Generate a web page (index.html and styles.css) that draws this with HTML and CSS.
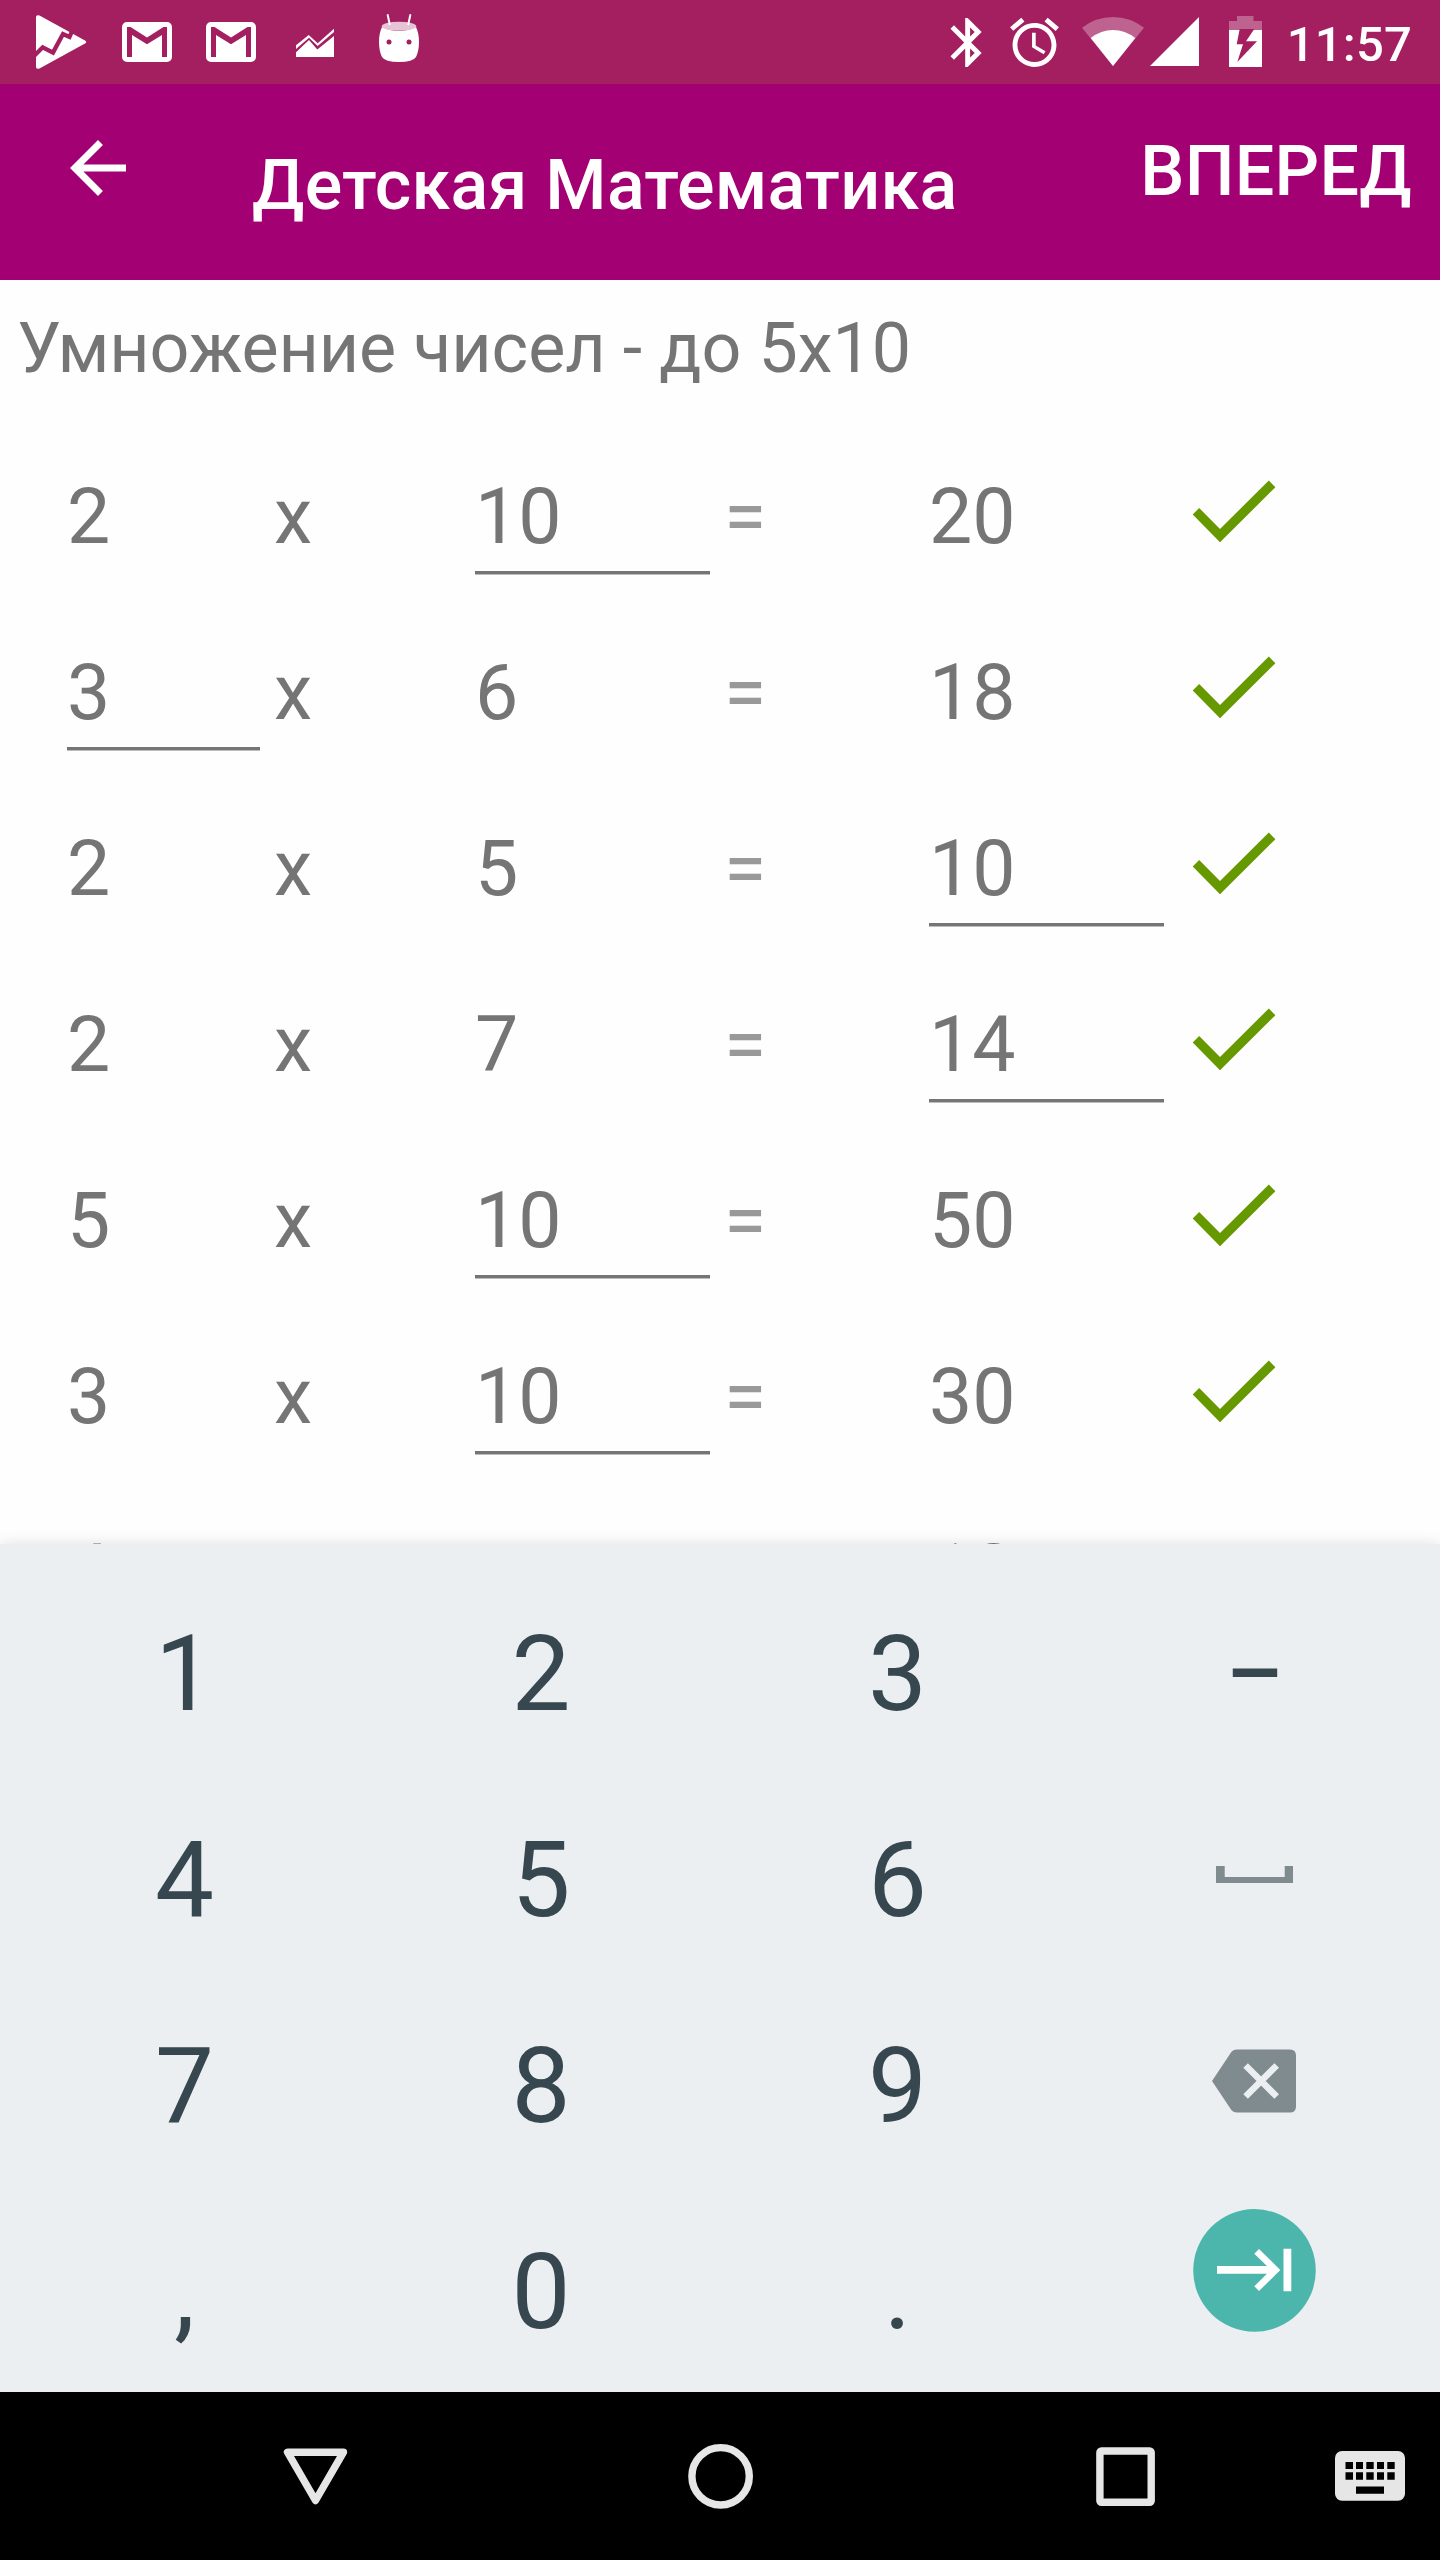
FILE: index.html
```html
<!DOCTYPE html>
<html lang="ru">
<head>
<meta charset="utf-8">
<title>Детская Математика</title>
<link rel="stylesheet" href="styles.css">
</head>
<body>
<svg class="defs" width="0" height="0" aria-hidden="true">
  <symbol id="check" viewBox="1190 429 90 176"><path d="M1192.7 514.5L1199.2 508L1220 529L1268.8 480.5L1275.4 487.2L1220 542.3Z"/></symbol>
</svg>
<div class="screen">
  <div class="status">
    <div class="notes">
      <svg viewBox="21 0 84 84"><path d="M36 17Q36 14.5 39.500 15.500L85 40.500Q87.500 42 85 43.500L39.500 68.500Q36 69.500 36 67Z"/><path class="crack" d="M33 57L42.700 47.300L53 52.600L63 34L69.500 37L73 29"/></svg>
      <svg viewBox="105 0 84 84"><path fill-rule="evenodd" d="M127 22H167A5 5 0 0 1 172 27V57A5 5 0 0 1 167 62H127A5 5 0 0 1 122 57V27A5 5 0 0 1 127 22ZM127 27V57H132V35L147 44.300L162 35V57H167V27H163.500L147 37.500L130.500 27Z"/></svg>
      <svg viewBox="105 0 84 84"><path fill-rule="evenodd" d="M127 22H167A5 5 0 0 1 172 27V57A5 5 0 0 1 167 62H127A5 5 0 0 1 122 57V27A5 5 0 0 1 127 22ZM127 27V57H132V35L147 44.300L162 35V57H167V27H163.500L147 37.500L130.500 27Z"/></svg>
      <svg viewBox="273 0 84 84"><path d="M296 45.300L308.700 35L317.700 43.300L334 28.700V32L317.700 46L309 37.700L296 49ZM296 52.300L309 40L317.300 49.600L334 36V57H296Z"/></svg>
      <svg viewBox="357 0 84 84"><path d="M382 27Q399 35 416 27Q419 33 419 42Q419 51 416 57Q413 62 399 62Q385 62 382 57Q379 51 379 42Q379 33 382 27Z"/><ellipse class="brain" cx="399" cy="26.300" rx="17.200" ry="4.500"/><path class="ears" d="M387.700 15L389.700 24.300M410.300 15L408.300 24.300"/><circle class="eye" cx="389" cy="42" r="2.500"/><circle class="eye" cx="409" cy="42" r="2.500"/></svg>
    </div>
    <svg class="system" viewBox="940 0 340 84">
      <path transform="translate(938.250 13.100) scale(2.450)" d="M17.710 7.710L12 2h-1v7.590L6.410 5 5 6.410 10.590 12 5 17.590 6.410 19 11 14.410V22h1l5.710-5.710-4.300-4.290 4.300-4.290zM13 5.830l1.880 1.880L13 9.590V5.830zm1.880 10.460L13 18.170v-3.760l1.880 1.880z"/>
      <path transform="translate(1005.200 13.200) scale(2.440)" d="M22 5.720l-4.600-3.860-1.290 1.530 4.600 3.860L22 5.720zM7.880 3.390L6.600 1.860 2 5.710l1.290 1.530 4.590-3.850zM12.500 8H11v6l4.750 2.850.75-1.230-4-2.370V8zM12 4c-4.970 0-9 4.030-9 9s4.020 9 9 9c4.970 0 9-4.030 9-9s-4.030-9-9-9zm0 16c-3.870 0-7-3.130-7-7s3.130-7 7-7 7 3.130 7 7-3.130 7-7 7z"/>
      <path opacity=".3" d="M1082 27.700Q1096 17 1113 17Q1130 17 1144 27.700L1113 66Z"/>
      <path d="M1090.700 38Q1101 30 1113 30Q1125 30 1135.300 38L1113 66Z"/>
      <path d="M1150 66H1199V17Z"/>
      <path opacity=".3" d="M1237 16H1253.500V21H1262V30H1229V21H1237Z"/>
      <path d="M1229 30H1262V67H1229Z"/>
      <path class="bolt" d="M1239.700 29H1254.300L1246 41.300H1257L1237.300 62L1243 44.300H1236.700Z"/>
    </svg>
    <span class="clock">11:57</span>
  </div>

  <header class="bar">
    <svg class="back" viewBox="0 0 24 24"><path d="M20 11H7.830l5.590-5.590L12 4l-8 8 8 8 1.410-1.410L7.830 13H20v-2z"/></svg>
    <h1 class="title">Детская Математика</h1>
    <span class="forward">ВПЕРЕД</span>
  </header>

  <main class="content">
    <h2 class="topic">Умножение чисел - до 5x10</h2>
    <div class="task"><span>2</span><span>x</span><span class="answer">10</span><span class="eq">=</span><span>20</span><svg class="check"><use href="#check"/></svg></div>
    <div class="task"><span class="answer first">3</span><span>x</span><span>6</span><span class="eq">=</span><span>18</span><svg class="check"><use href="#check"/></svg></div>
    <div class="task"><span>2</span><span>x</span><span>5</span><span class="eq">=</span><span class="answer">10</span><svg class="check"><use href="#check"/></svg></div>
    <div class="task"><span>2</span><span>x</span><span>7</span><span class="eq">=</span><span class="answer">14</span><svg class="check"><use href="#check"/></svg></div>
    <div class="task"><span>5</span><span>x</span><span class="answer">10</span><span class="eq">=</span><span>50</span><svg class="check"><use href="#check"/></svg></div>
    <div class="task"><span>3</span><span>x</span><span class="answer">10</span><span class="eq">=</span><span>30</span><svg class="check"><use href="#check"/></svg></div>
    <div class="task"><span>4</span><span>x</span><span class="answer"></span><span class="eq">=</span><span>12</span></div>
  </main>

  <div class="keypad">
    <span>1</span><span>2</span><span>3</span><span class="dash">–</span>
    <span>4</span><span>5</span><span>6</span>
    <svg viewBox="1077 1778 357 206"><path class="muted" d="M1216 1866H1224.700V1877H1284.700V1866H1293V1883H1216Z"/></svg>
    <span>7</span><span>8</span><span>9</span>
    <svg viewBox="1077 1984 357 206"><path class="muted" d="M1212 2081L1231 2052.500Q1233 2049.500 1237 2049.500H1290Q1296 2049.500 1296 2055.500V2106.500Q1296 2112.500 1290 2112.500H1237Q1233 2112.500 1231 2109.500Z"/><path class="cross" d="M1245.600 2065.500L1276.700 2096.500M1276.700 2065.500L1245.600 2096.500"/></svg>
    <span>,</span><span>0</span><span>.</span>
    <svg viewBox="1077 2190 357 206"><circle class="next" cx="1254.500" cy="2270.400" r="61.300"/><path fill="#fff" d="M1217 2266H1267L1254.300 2253.700L1259 2249L1280.300 2270L1259 2291L1254.300 2286.300L1267 2273.700H1217ZM1283.500 2248.700H1291.300V2291.300H1283.500Z"/></svg>
  </div>

  <nav class="nav">
    <svg viewBox="0 2392 1440 168">
      <path class="line" d="M287.500 2452.200H343.500L315.500 2500.500Z"/>
      <circle class="line" cx="720.600" cy="2476.300" r="28.700"/>
      <rect class="line" x="1099.900" y="2451" width="51.300" height="51.300" rx="1.500"/>
      <path class="fill" fill-rule="evenodd" d="M1342 2451H1398A7 7 0 0 1 1405 2458V2493.700A7 7 0 0 1 1398 2500.700H1342A7 7 0 0 1 1335 2493.700V2458A7 7 0 0 1 1342 2451ZM1345.500 2462V2469H1353V2462ZM1356 2462V2469H1363V2462ZM1366.300 2462V2469H1373.700V2462ZM1377 2462V2469H1384V2462ZM1387.300 2462V2469H1394.700V2462ZM1345.500 2472.300V2479.700H1353V2472.300ZM1356 2472.300V2479.700H1363V2472.300ZM1366.300 2472.300V2479.700H1373.700V2472.300ZM1377 2472.300V2479.700H1384V2472.300ZM1387.300 2472.300V2479.700H1394.700V2472.300ZM1356 2486.500V2493.700H1384V2486.500Z"/>
    </svg>
  </nav>
</div>
</body>
</html>
```
FILE: styles.css
```css
* { box-sizing: border-box; }
body { margin: 0; background: #fefefe; font-family: Roboto, "Noto Sans", sans-serif; }
svg { display: block; flex: none; }
.defs { position: absolute; }
.screen { width: 1440px; height: 2560px; display: flex; flex-direction: column; overflow: hidden; }

.status { height: 84px; flex: none; display: flex; padding: 0 28px 0 21px; background: #a31f5f; color: #fff; fill: #fff; }
.notes { display: flex; flex: 1; }
.notes svg { width: 84px; height: 84px; }
.crack { fill: none; stroke: #a31f5f; stroke-width: 4.3; }
.brain { fill: #e6c3d5; }
.ears { fill: none; stroke: #fff; stroke-width: 2; stroke-linecap: round; }
.eye, .bolt { fill: #a31f5f; }
.system { width: 340px; height: 84px; }
.clock { width: 132px; padding-top: 5px; line-height: 80px; text-align: right; font-size: 49px; font-weight: 500; letter-spacing: .2px; }

.bar { height: 196px; flex: none; display: flex; align-items: flex-start; padding: 0 28px 0 56px; background: #a30074; color: #fff; }
.back { width: 84px; height: 84px; margin: 42px 112px 0 0; fill: #fff; }
.title { flex: 1; margin: 0; padding-top: 6px; font-size: 70px; font-weight: 500; line-height: 190px; letter-spacing: .3px; white-space: nowrap; }
.forward { font-size: 70px; font-weight: 500; line-height: 174px; letter-spacing: .3px; }

.content { height: 1264px; flex: none; overflow: hidden; color: #757575; }
.topic { height: 149px; margin: 0; padding-left: 17px; font-size: 70px; font-weight: 400; line-height: 136px; letter-spacing: -.1px; }
.task { display: grid; grid-template-columns: 207px 201px 249px 205px 261px 90px; height: 176px; padding-left: 67px; font-size: 77px; line-height: 176px; }
.answer { width: 235px; height: 145px; border-bottom: 3px solid #757575; box-shadow: 0 1px #bdbdbd; }
.first { width: 193px; }
.eq { color: #999; }
.check { width: 90px; height: 176px; fill: #690; }

.keypad { position: relative; z-index: 1; height: 848px; flex: none; display: grid; grid-template-columns: 357px 356px 357px 357px; grid-template-rows: 206px 206px 206px 206px; padding: 28px 7px 0 6px; background: #eceff1; color: #37474f; box-shadow: 0 0 14px rgba(0, 0, 0, .12); font-size: 105px; line-height: 206px; text-align: center; }
.keypad svg { width: 357px; height: 206px; margin-left: 1px; }
.dash { font-size: 89px; font-weight: 500; line-height: 204px; }
.muted { fill: #808b8f; }
.cross { fill: none; stroke: #eceff1; stroke-width: 6.5; }
.next { fill: #4db6ac; }

.nav { position: relative; z-index: 2; height: 168px; flex: none; background: #000; }
.nav svg { width: 1440px; height: 168px; }
.line { fill: none; stroke: #e6e6e6; stroke-width: 7.4; stroke-linejoin: round; }
.fill { fill: #e6e6e6; }
```
